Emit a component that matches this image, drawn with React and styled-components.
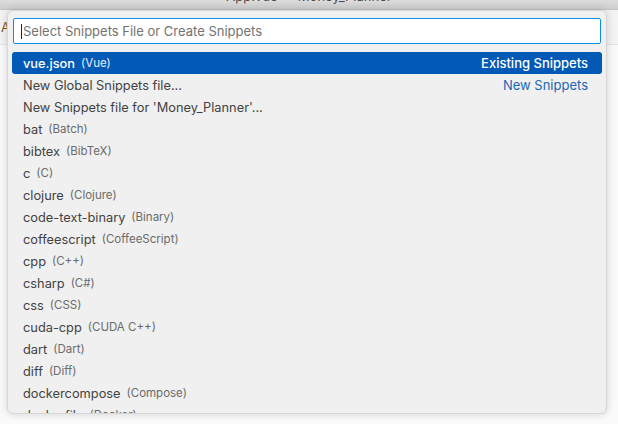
import styled, { createGlobalStyle } from "styled-components";

const GlobalStyle = createGlobalStyle`
  html, body {
    margin: 0;
    padding: 0;
    background: #f8f8f8;
    font-family: Inter, "Liberation Sans", sans-serif;
    -webkit-font-smoothing: antialiased;
  }
`;

const items = [
  { label: "vue.json", desc: "(Vue)", detail: "Existing Snippets", active: true },
  { label: "New Global Snippets file...", detail: "New Snippets" },
  { label: "New Snippets file for 'Money_Planner'..." },
  { label: "bat", desc: "(Batch)" },
  { label: "bibtex", desc: "(BibTeX)" },
  { label: "c", desc: "(C)" },
  { label: "clojure", desc: "(Clojure)" },
  { label: "code-text-binary", desc: "(Binary)" },
  { label: "coffeescript", desc: "(CoffeeScript)" },
  { label: "cpp", desc: "(C++)" },
  { label: "csharp", desc: "(C#)" },
  { label: "css", desc: "(CSS)" },
  { label: "cuda-cpp", desc: "(CUDA C++)" },
  { label: "dart", desc: "(Dart)" },
  { label: "diff", desc: "(Diff)" },
  { label: "dockercompose", desc: "(Compose)" },
  { label: "dockerfile", desc: "(Docker)" },
];

const App = () => {
  return (
    <>
      <GlobalStyle />
      <Window>
        <TitleBar>
          <TitleText>App.vue — Money_Planner</TitleText>
        </TitleBar>
        <Workbench>
          <TabStrip>
            <TabGlyph>A</TabGlyph>
          </TabStrip>
          <Editor />
          <QuickPick>
            <SearchBox>
              <Caret />
              <Placeholder>Select Snippets File or Create Snippets</Placeholder>
            </SearchBox>
            <List>
              {items.map((item, i) => (
                <Row key={i} $active={item.active}>
                  <Label $active={item.active}>{item.label}</Label>
                  {item.desc && <Desc $active={item.active}>{item.desc}</Desc>}
                  {item.detail && (
                    <Detail $active={item.active}>{item.detail}</Detail>
                  )}
                </Row>
              ))}
            </List>
          </QuickPick>
        </Workbench>
      </Window>
    </>
  );
};

const Window = styled.div`
  width: 618px;
  height: 424px;
  overflow: hidden;
  display: flex;
  flex-direction: column;
`;

const TitleBar = styled.div`
  height: 10px;
  flex-shrink: 0;
  background: linear-gradient(#dcdcdc, #cfcfcf);
  border-bottom: 1px solid #c4c4c4;
  box-sizing: border-box;
  overflow: hidden;
  display: flex;
  justify-content: center;
`;

const TitleText = styled.div`
  margin-top: -12px;
  font-size: 13px;
  line-height: 16px;
  color: #4a4a4a;
`;

const Workbench = styled.div`
  flex: 1;
  position: relative;
  display: flex;
  flex-direction: column;
`;

const TabStrip = styled.div`
  height: 34px;
  background: #f3f3f3;
  border-bottom: 1px solid #e4e4e4;
  display: flex;
  align-items: center;
  padding-left: 1px;
`;

const TabGlyph = styled.span`
  font-size: 13px;
  color: #8a5a2b;
`;

const Editor = styled.div`
  flex: 1;
  background: #fafafa;
`;

const QuickPick = styled.div`
  position: absolute;
  top: 0;
  left: 7px;
  width: 600px;
  height: 404px;
  box-sizing: border-box;
  background: #f0f0f0;
  border: 1px solid #d6d6d6;
  border-radius: 6px;
  box-shadow: 0 0 8px rgba(0, 0, 0, 0.16);
  padding: 7px 5px 0 5px;
  overflow: hidden;
  display: flex;
  flex-direction: column;
  gap: 8px;
`;

const SearchBox = styled.div`
  height: 26px;
  flex-shrink: 0;
  box-sizing: border-box;
  background: #ffffff;
  border: 1px solid #0a8ee8;
  border-radius: 2px;
  display: flex;
  align-items: center;
  padding-left: 7px;
`;

const Caret = styled.span`
  width: 1px;
  height: 15px;
  background: #222;
  margin-right: 1px;
`;

const Placeholder = styled.span`
  font-size: 13px;
  color: #737373;
`;

const List = styled.div`
  display: flex;
  flex-direction: column;
  margin: 0 -1px;
`;

const Row = styled.div`
  height: 22px;
  flex-shrink: 0;
  display: flex;
  align-items: center;
  padding: 0 14px 0 11px;
  border-radius: 3px;
  background: ${(p) => (p.$active ? "#0259b6" : "transparent")};
`;

const Label = styled.span`
  font-size: 12.8px;
  color: ${(p) => (p.$active ? "#ffffff" : "#424242")};
  font-weight: ${(p) => (p.$active ? 500 : 400)};
`;

const Desc = styled.span`
  font-size: 11.5px;
  margin-left: 6px;
  color: ${(p) => (p.$active ? "#e8eefa" : "#6b6b6b")};
`;

const Detail = styled.span`
  margin-left: auto;
  font-size: 13px;
  color: ${(p) => (p.$active ? "#ffffff" : "#1a68b8")};
  font-weight: ${(p) => (p.$active ? 500 : 400)};
`;

export default App;
